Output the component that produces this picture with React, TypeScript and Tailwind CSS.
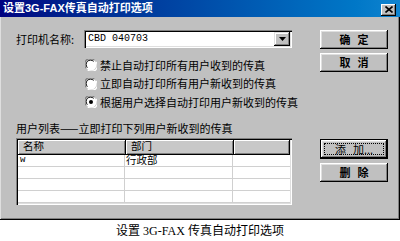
import React from "react";

const cjk = { fontFamily: '"Noto Sans CJK SC", "Noto Sans", sans-serif' };

function Label2({ a, b }: { a: string; b: string }) {
  return (
    <span className="flex gap-[7px]">
      <span>{a}</span>
      <span>{b}</span>
    </span>
  );
}

function Btn({ a, b, bold = true, isDefault = false, className = "" }: { a: string; b: string; bold?: boolean; isDefault?: boolean; className?: string }) {
  if (isDefault) {
    return (
      <div className={`w-[68px] h-[20px] border border-black bg-[#c0c0c0] ${className}`}>
        <div className="w-full h-full shadow-[inset_-1px_-1px_#000,inset_1px_1px_#fff,inset_-2px_-2px_#808080,inset_2px_2px_#dfdfdf] flex items-center justify-center p-[3px]">
          <div className="w-full h-full border border-dotted border-black flex items-center justify-center text-[11px] leading-none text-black" style={cjk}>
            <Label2 a={a} b={b} />
          </div>
        </div>
      </div>
    );
  }
  return (
    <div
      className={`w-[68px] h-[19px] bg-[#c0c0c0] shadow-[inset_-1px_-1px_#000,inset_1px_1px_#fff,inset_-2px_-2px_#808080,inset_2px_2px_#dfdfdf] flex items-center justify-center text-[11px] leading-none text-black ${bold ? "font-semibold" : ""} ${className}`}
      style={cjk}
    >
      <Label2 a={a} b={b} />
    </div>
  );
}

function Radio({ checked, label }: { checked?: boolean; label: string }) {
  return (
    <div className="h-[18.5px] flex items-center">
      <svg width="12" height="12" viewBox="0 0 12 12" className="ml-[1px] shrink-0">
        <circle cx="6" cy="6" r="5.5" fill="#fff" />
        <path d="M1.2 9.2 A5.3 5.3 0 0 1 9.2 1.2" stroke="#808080" strokeWidth="1.2" fill="none" />
        <path d="M2.4 8.6 A4.2 4.2 0 0 1 8.6 2.4" stroke="#000" strokeWidth="1" fill="none" />
        <path d="M10.8 2.8 A5.3 5.3 0 0 1 2.8 10.8" stroke="#fff" strokeWidth="1.2" fill="none" />
        {checked && <circle cx="6" cy="6" r="2" fill="#000" />}
      </svg>
      <span className="ml-[3px] text-[11px] leading-none text-black whitespace-nowrap" style={cjk}>
        {label}
      </span>
    </div>
  );
}

function HeaderCell({ label, w }: { label: string; w: string }) {
  return (
    <div className={`${w} h-full bg-[#c8c8c8] shadow-[inset_-1px_-1px_#000,inset_1px_1px_#fff,inset_-2px_-2px_#808080] flex items-start pt-[1px] pl-[5px] text-[10.5px] leading-none text-black`} style={cjk}>
      {label}
    </div>
  );
}

function Row({ a = "", b = "" }: { a?: string; b?: string }) {
  return (
    <div className="h-[12px] flex border-b border-[#d0d0d0]">
      <div className="w-[107px] border-r border-[#d0d0d0] pl-[2px] flex items-center text-[9px] leading-none text-black" style={{ fontFamily: '"Liberation Mono", monospace' }}>
        {a}
      </div>
      <div className="w-[108px] border-r border-[#d0d0d0] pl-[1px] flex items-end text-[10.5px] leading-none text-black" style={cjk}>
        {b}
      </div>
      <div className="flex-1" />
    </div>
  );
}

export default function App() {
  return (
    <div className="w-[400px] h-[241px] bg-white overflow-hidden">
      <div className="w-[400px] h-[220px] bg-[#c0c0c0] shadow-[inset_-1px_-1px_#000,inset_1px_1px_#dfdfdf,inset_-2px_-2px_#808080] flex flex-col">
        {/* title bar */}
        <div className="h-[17px] bg-gradient-to-r from-[#000080] to-[#1084d0] flex items-center justify-between pl-[3px] pr-[4px]">
          <span className="text-white font-bold text-[11px] leading-none" style={{ fontFamily: '"Liberation Sans", "Noto Sans CJK SC", sans-serif' }}>
            设置3G-FAX传真自动打印选项
          </span>
          <div className="w-[15px] h-[12px] mt-[2px] bg-[#c0c0c0] shadow-[inset_-1px_-1px_#000,inset_1px_1px_#fff,inset_-2px_-2px_#808080] flex items-center justify-center">
            <svg width="8" height="7" viewBox="0 0 8 7">
              <path d="M0.5 0.5 L7.5 6.5 M7.5 0.5 L0.5 6.5" stroke="#000" strokeWidth="1.6" />
            </svg>
          </div>
        </div>

        {/* body */}
        <div className="flex pl-[16px] pt-[13px]">
          {/* left column */}
          <div className="w-[276px] flex flex-col">
            <div className="h-[18px] flex items-center">
              <span className="w-[68px] text-[11px] leading-none text-black whitespace-nowrap" style={cjk}>
                打印机名称:
              </span>
              <div className="flex-1 h-[18px] bg-white shadow-[inset_1px_1px_#808080,inset_2px_2px_#000,inset_-1px_-1px_#fff,inset_-2px_-2px_#dfdfdf] flex items-center p-[2px]">
                <span className="flex-1 pl-[2px] text-[10px] leading-none text-black" style={{ fontFamily: '"Liberation Mono", monospace' }}>
                  CBD 040703
                </span>
                <div className="w-[16px] h-[14px] bg-[#c0c0c0] shadow-[inset_-1px_-1px_#000,inset_1px_1px_#dfdfdf,inset_-2px_-2px_#808080,inset_2px_2px_#fff] flex items-center justify-center">
                  <svg width="7" height="4" viewBox="0 0 7 4">
                    <path d="M0 0 H7 L3.5 4 Z" fill="#000" />
                  </svg>
                </div>
              </div>
            </div>

            <div className="mt-[8px] pl-[68px] flex flex-col">
              <Radio label="禁止自动打印所有用户收到的传真" />
              <Radio label="立即自动打印所有用户新收到的传真" />
              <Radio checked label="根据用户选择自动打印用户新收到的传真" />
            </div>

            <div className="mt-[10px] h-[14px] flex items-center text-[11px] leading-none text-black whitespace-nowrap" style={cjk}>
              用户列表——立即打印下列用户新收到的传真
            </div>

            <div className="mt-[2px] h-[67px] bg-white shadow-[inset_1px_1px_#808080,inset_2px_2px_#000,inset_-1px_-1px_#fff,inset_-2px_-2px_#dfdfdf] p-[2px] flex flex-col">
              <div className="h-[15px] flex">
                <HeaderCell label="名称" w="w-[108px]" />
                <HeaderCell label="部门" w="w-[108px]" />
                <HeaderCell label="" w="flex-1" />
              </div>
              <Row a="w" b="行政部" />
              <Row />
              <Row />
              <Row />
            </div>
          </div>

          {/* right column */}
          <div className="ml-[28px] w-[68px] flex flex-col">
            <Btn a="确" b="定" />
            <Btn a="取" b="消" className="mt-[4px]" />
            <Btn a="添" b="加..." isDefault bold={false} className="mt-[67px]" />
            <Btn a="删" b="除" className="mt-[4px]" />
          </div>
        </div>
      </div>
      <div className="h-[21px] flex items-center justify-center text-[12px] leading-none text-black" style={{ fontFamily: '"Liberation Serif", "Noto Sans CJK SC", serif' }}>
        设置 3G-FAX 传真自动打印选项
      </div>
    </div>
  );
}
